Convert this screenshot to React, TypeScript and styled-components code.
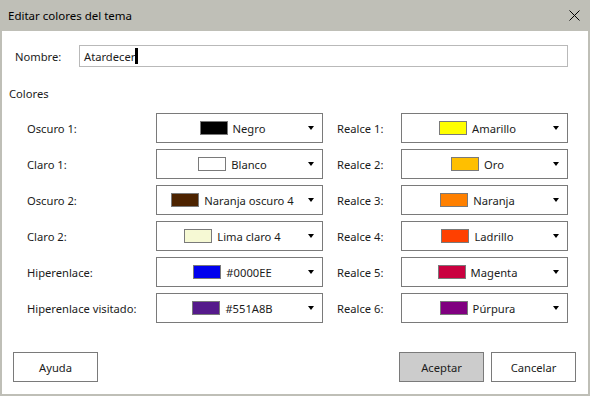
import { Fragment } from 'react';
import styled, { createGlobalStyle } from 'styled-components';

const GlobalStyle = createGlobalStyle`
    html, body {
        margin: 0;
        padding: 0;
        background: #ffffff;
    }
    body {
        font-family: "Noto Sans", "Open Sans", sans-serif;
        font-size: 11.2px;
        color: #1b1b1b;
    }
`;

const Window = styled.div`
    width: 590px;
    height: 396px;
    display: flex;
    flex-direction: column;
    box-sizing: border-box;
`;

const TitleBar = styled.div`
    height: 31px;
    flex-shrink: 0;
    background: #bfbfb7;
    display: flex;
    align-items: center;
    justify-content: space-between;
    padding: 0 10px 0 8px;
    font-size: 11.5px;
    color: #000;
`;

const Body = styled.div`
    flex: 1;
    border: 2px solid #bfbfb7;
    border-top: none;
    display: flex;
    flex-direction: column;
`;

const NameRow = styled.div`
    display: flex;
    align-items: center;
    margin-top: 14px;
    padding: 0 20px 0 13px;
`;

const NameLabel = styled.span`
    width: 64px;
    flex-shrink: 0;
`;

const NameInput = styled.div`
    flex: 1;
    height: 22px;
    box-sizing: border-box;
    border: 1px solid #b9b9b9;
    display: flex;
    align-items: center;
    padding-left: 4px;
`;

const Caret = styled.span`
    display: inline-block;
    width: 3px;
    height: 16px;
    background: #000;
`;

const SectionTitle = styled.div`
    margin-top: 19px;
    line-height: 16px;
    padding-left: 7px;
`;

const ColorGrid = styled.div`
    margin-top: 11px;
    padding-left: 25px;
    display: grid;
    grid-template-columns: 129px 167px 78px 167px;
    row-gap: 6px;
    grid-auto-rows: 30px;
`;

const RowLabel = styled.span<{ $right?: boolean }>`
    display: flex;
    align-items: center;
    padding-left: ${p => (p.$right ? '14px' : '0')};
    white-space: nowrap;
`;

const Dropdown = styled.div`
    box-sizing: border-box;
    border: 1px solid #7a7a7a;
    display: flex;
    align-items: center;
`;

const DropValue = styled.div`
    flex: 1;
    display: flex;
    align-items: center;
    justify-content: center;
    gap: 5px;
    padding-left: 2px;
`;

const Swatch = styled.span<{ $color: string }>`
    width: 28px;
    height: 14px;
    box-sizing: border-box;
    border: 1px solid #7a7a7a;
    background: ${p => p.$color};
`;

const Arrow = styled.span`
    width: 0;
    height: 0;
    border-left: 3.5px solid transparent;
    border-right: 3.5px solid transparent;
    border-top: 4px solid #000;
    margin: 0 8px 0 2px;
`;

const ButtonBar = styled.div`
    margin-top: 29px;
    display: flex;
    padding: 0 12px 0 11px;
    gap: 7px;
`;

const Spacer = styled.div`
    flex: 1;
`;

const Button = styled.button<{ $primary?: boolean }>`
    width: 85px;
    height: 30px;
    box-sizing: border-box;
    border: 1px solid #7a7a7a;
    background: ${p => (p.$primary ? '#cccccc' : '#ffffff')};
    font-family: inherit;
    font-size: 11.2px;
    color: #1b1b1b;
    padding: 0;
`;

const CloseIcon = () => (
    <svg width="11" height="11" viewBox="0 0 11 11">
        <path d="M0.5 0.5 L10.5 10.5 M10.5 0.5 L0.5 10.5" stroke="#000" strokeWidth="1" />
    </svg>
);

type Entry = { label: string; color: string; name: string };

const left: Entry[] = [
    { label: 'Oscuro 1:', color: '#000000', name: 'Negro' },
    { label: 'Claro 1:', color: '#ffffff', name: 'Blanco' },
    { label: 'Oscuro 2:', color: '#4d2300', name: 'Naranja oscuro 4' },
    { label: 'Claro 2:', color: '#f6f9d4', name: 'Lima claro 4' },
    { label: 'Hiperenlace:', color: '#0000ee', name: '#0000EE' },
    { label: 'Hiperenlace visitado:', color: '#551a8b', name: '#551A8B' },
];

const right: Entry[] = [
    { label: 'Realce 1:', color: '#ffff00', name: 'Amarillo' },
    { label: 'Realce 2:', color: '#ffbf00', name: 'Oro' },
    { label: 'Realce 3:', color: '#ff8000', name: 'Naranja' },
    { label: 'Realce 4:', color: '#ff4000', name: 'Ladrillo' },
    { label: 'Realce 5:', color: '#c9003f', name: 'Magenta' },
    { label: 'Realce 6:', color: '#800080', name: 'Púrpura' },
];

function ColorDropdown({ entry }: { entry: Entry }) {
    return (
        <Dropdown>
            <DropValue>
                <Swatch $color={entry.color} />
                <span>{entry.name}</span>
            </DropValue>
            <Arrow />
        </Dropdown>
    );
}

export default function App() {
    return (
        <>
            <GlobalStyle />
            <Window>
                <TitleBar>
                    <span>Editar colores del tema</span>
                    <CloseIcon />
                </TitleBar>
                <Body>
                    <NameRow>
                        <NameLabel>Nombre:</NameLabel>
                        <NameInput>
                            Atardecer<Caret />
                        </NameInput>
                    </NameRow>
                    <SectionTitle>Colores</SectionTitle>
                    <ColorGrid>
                        {left.map((l, i) => (
                            <Fragment key={i}>
                                <RowLabel>{l.label}</RowLabel>
                                <ColorDropdown entry={l} />
                                <RowLabel $right>{right[i].label}</RowLabel>
                                <ColorDropdown entry={right[i]} />
                            </Fragment>
                        ))}
                    </ColorGrid>
                    <ButtonBar>
                        <Button>Ayuda</Button>
                        <Spacer />
                        <Button $primary>Aceptar</Button>
                        <Button>Cancelar</Button>
                    </ButtonBar>
                </Body>
            </Window>
        </>
    );
}
